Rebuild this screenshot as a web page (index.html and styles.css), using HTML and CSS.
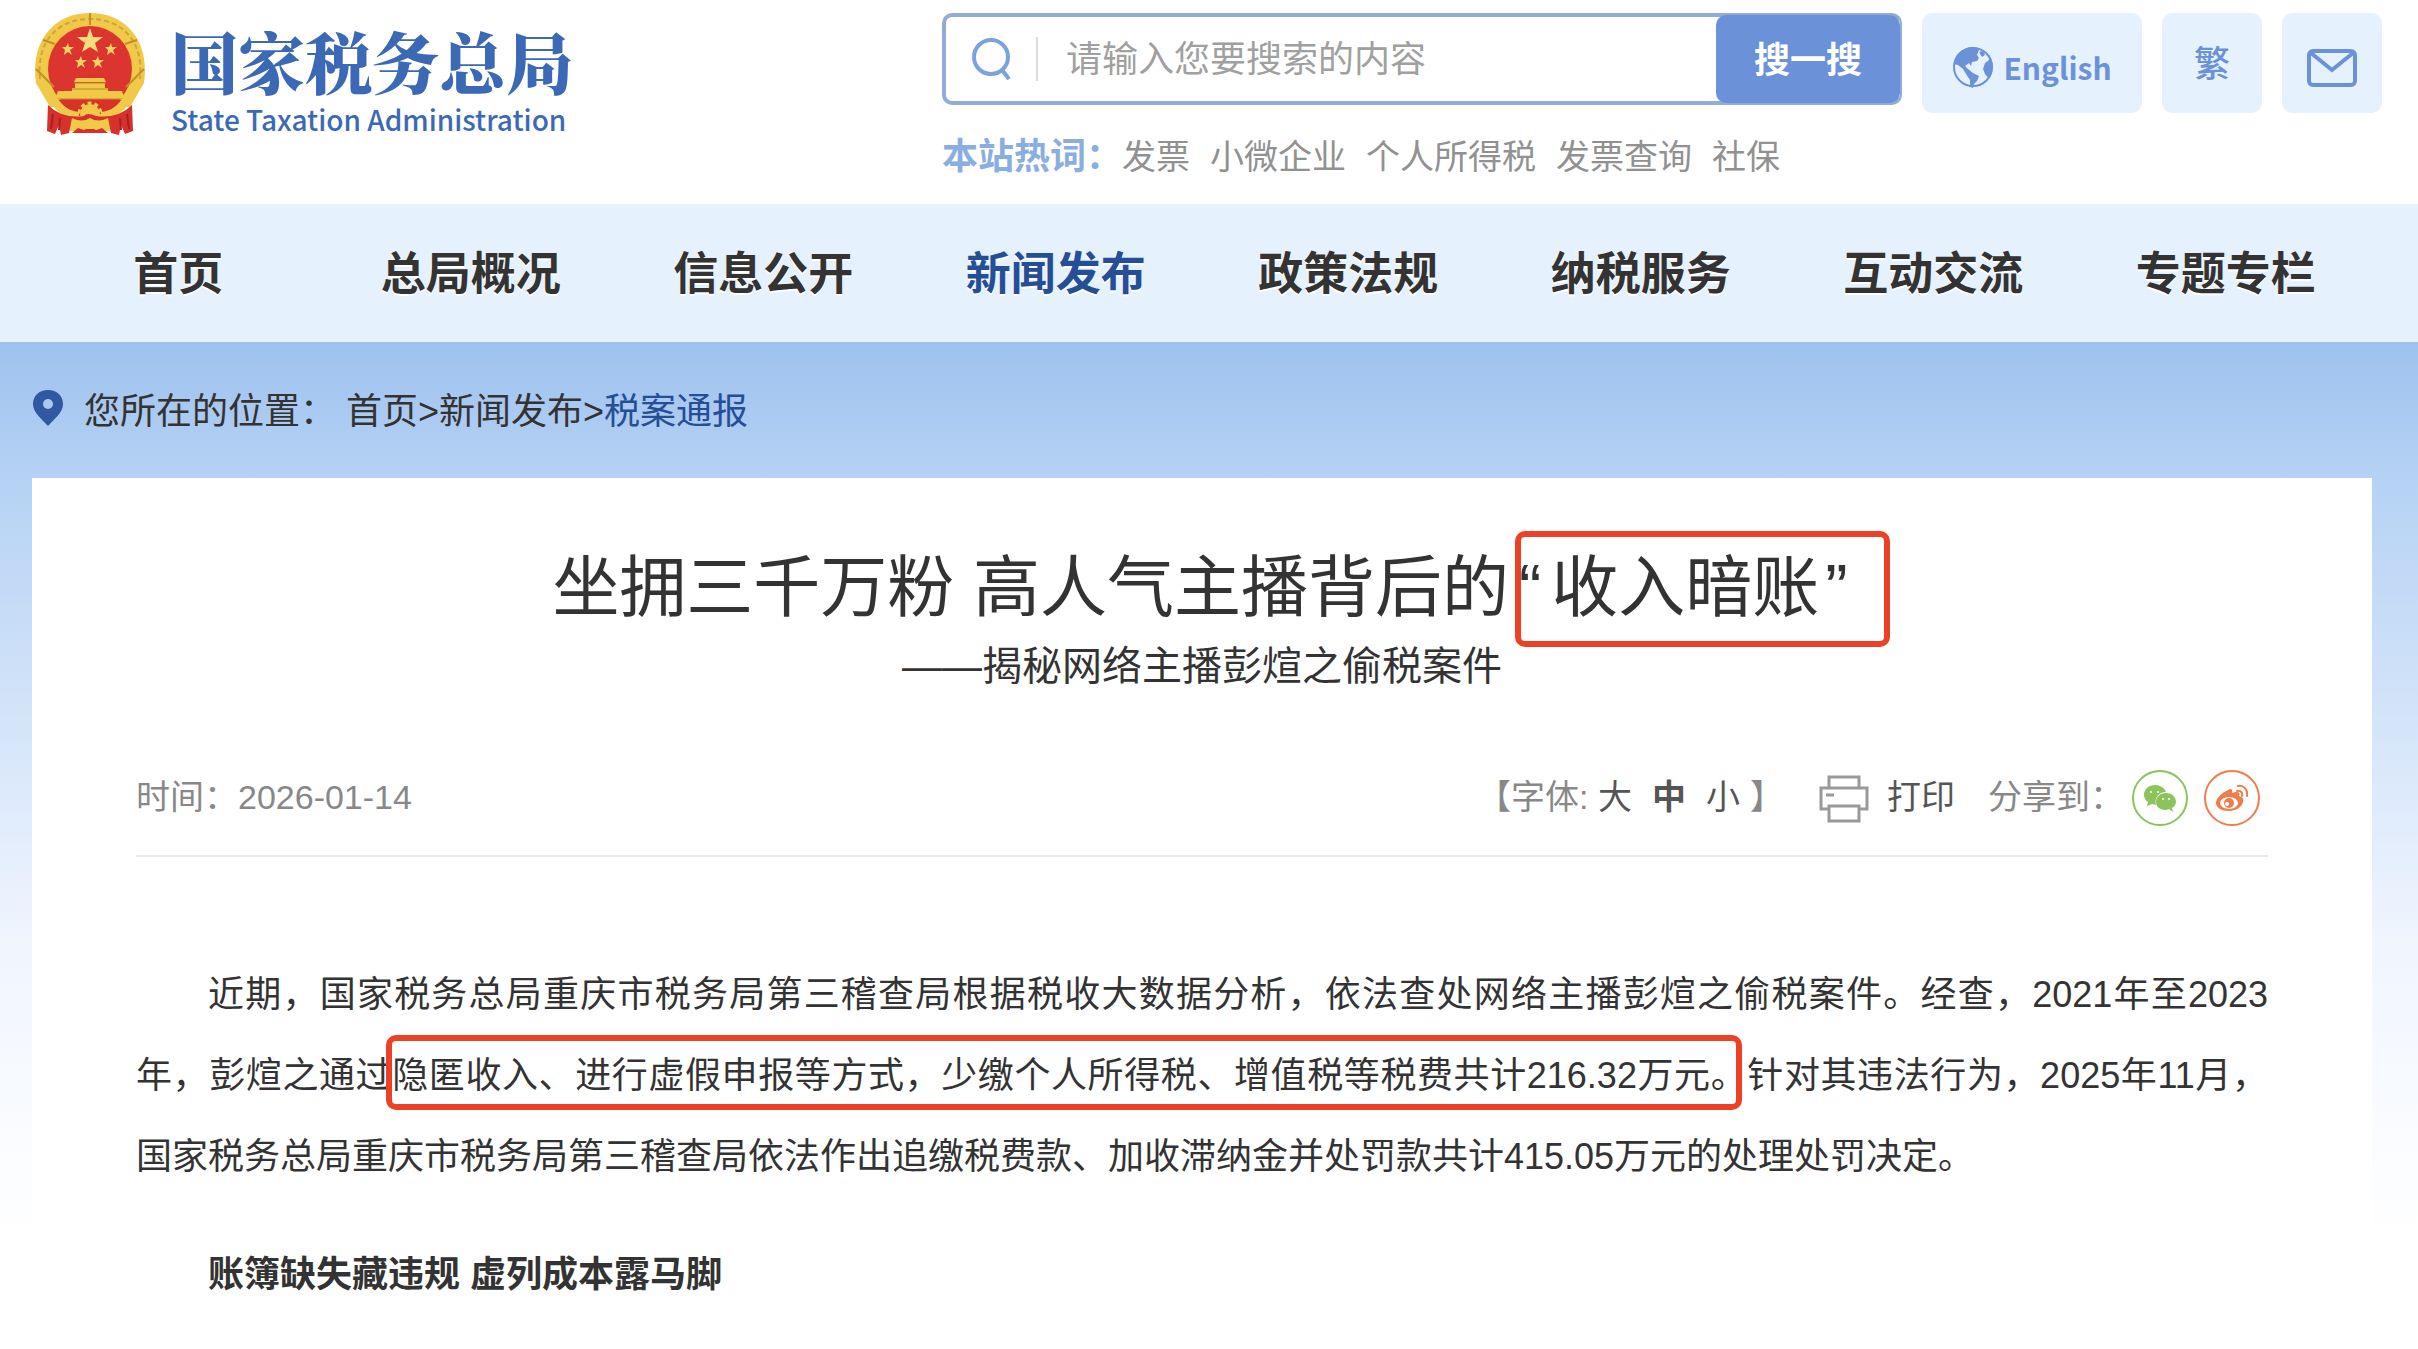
FILE: index.html
```html
<!DOCTYPE html>
<html lang="zh-CN">
<head>
  <meta charset="UTF-8">
  <meta name="viewport" content="width=device-width, initial-scale=1.0">
  <title>国家税务总局 - 税案通报</title>
  <link rel="stylesheet" href="styles.css">
</head>
<body>
  <header class="header">
    <a class="logo" href="#">
      <svg class="emblem" viewBox="0 0 112 122" aria-hidden="true">
        <path d="M16 94L2 70C-4 28 20 0 56 0s60 28 54 70L96 94z" fill="#f0c948"/>
        <path d="M6 66C2 28 24 6 56 6s54 22 50 60" fill="none" stroke="#d3a335" stroke-width="2" stroke-dasharray="5 3"/>
        <ellipse cx="56" cy="56" rx="42" ry="43" fill="#dc3530"/>
        <path d="M2 56l18 18M110 56L92 74M9 27l12 4M103 27l-12 4M56 0v12" stroke="#c18f25" stroke-width="2"/>
        <path d="M56 15l3 9h10l-8 6 3 9-8-5-8 5 3-9-8-6h10z" fill="#f6dc7c"/>
        <g fill="#f3d35f">
          <path id="star" d="M34 30l1 4h5l-4 3 2 5-4-3-4 3 1-5-3-3h4z"/>
          <use href="#star" x="43"/>
          <use href="#star" x="13" y="13"/>
          <use href="#star" x="30" y="13"/>
        </g>
        <path d="M42 65h28l2 4H40zM41 70h30v6H41zM38 75h36v6H38zM24 78h64l3 8H21z" fill="#f0c948"/>
        <path d="M40 70h32M38 76h36M22 86h68" stroke="#bb8b22"/>
        <path d="M20 87h72l-9 16H29z" fill="#d8322b"/>
        <path d="M18 84q10 18 27 19M94 84q-10 18-27 19" fill="none" stroke="#f0c948" stroke-width="8"/>
        <circle cx="56" cy="101" r="10" fill="#f0c948"/>
        <circle cx="56" cy="101" r="11" fill="none" stroke="#f0c948" stroke-width="3" stroke-dasharray="4 3"/>
        <path d="M30 104h52l-6 14H36z" fill="#f0c948"/>
        <path d="M14 92q14 14 36 11 3-4 12 0 22 3 36-11l1 26-8 3-4-9-2 10-8-2-3-15q-10 5-18 0-8 5-18 0l-3 15-8 2-2-10-4 9-8-3z" fill="#d6312c"/>
        <path d="M38 120l6-5 6 2 6-3 6 3 6-2 6 5z" fill="#d6312c"/>
        <path d="M46 110l4 3 3-3 3 4 3-4 3 3 4-3v6H46z" fill="#f0c948"/>
        <path d="M19 101l-2 15M26 105l-1 12M93 101l2 15M86 105l1 12" stroke="#a91f1f" stroke-width="2"/>
      </svg>
      <span class="logo-text">
        <span class="logo-cn">国家税务总局</span>
        <span class="logo-en">State Taxation Administration</span>
      </span>
    </a>

    <div class="search-area">
      <form class="search">
        <svg class="search-icon" viewBox="0 0 40 44" aria-hidden="true">
          <circle cx="19" cy="20" r="17" fill="none" stroke="#7aa2dc" stroke-width="4"/>
          <path d="M30 33l7 9" stroke="#7aa2dc" stroke-width="4"/>
        </svg>
        <input class="search-input" type="text" placeholder="请输入您要搜索的内容" aria-label="搜索">
        <button class="search-button" type="button">搜一搜</button>
      </form>
      <div class="hot">
        <strong class="hot-title">本站热词：</strong>
        <a href="#">发票</a>
        <a href="#">小微企业</a>
        <a href="#">个人所得税</a>
        <a href="#">发票查询</a>
        <a href="#">社保</a>
      </div>
    </div>

    <div class="tools">
      <a class="tool tool-english" href="#">
        <svg class="globe" viewBox="0 0 42 42" aria-hidden="true">
          <circle cx="21" cy="21" r="19" fill="none" stroke="#6b92d8" stroke-width="2"/>
          <path d="M2 18C3 8 11 1 22 1l5 3-2 5 2 3-2 3-5 1-1 4-2-3-4 3 3 3 5 4 6 3-2 5-3 3-1 4-3-1v-7l-4-6-3-5-5-4z" fill="#6b92d8"/>
          <path d="M37 9c5 7 5 17 0 24l-4-5-2-5 2-6 4-3zM27 6l4-1 2 4-3 2z" fill="#6b92d8"/>
        </svg>
        <span>English</span>
      </a>
      <a class="tool tool-square" href="#">繁</a>
      <a class="tool tool-square" href="#" aria-label="邮箱">
        <svg class="mail" viewBox="0 0 50 38" aria-hidden="true">
          <rect x="2" y="2" width="46" height="34" rx="4" fill="none" stroke="#6b92d8" stroke-width="4"/>
          <path d="M4 4l21 17L46 4" fill="none" stroke="#6b92d8" stroke-width="4"/>
        </svg>
      </a>
    </div>
  </header>

  <nav class="nav">
    <a href="#">首页</a>
    <a href="#">总局概况</a>
    <a href="#">信息公开</a>
    <a class="active" href="#">新闻发布</a>
    <a href="#">政策法规</a>
    <a href="#">纳税服务</a>
    <a href="#">互动交流</a>
    <a href="#">专题专栏</a>
  </nav>

  <main class="main">
    <div class="crumbs">
      <svg class="pin" viewBox="0 0 32 38" aria-hidden="true">
        <path d="M16 1C7 1 1 7 1 15c0 9 9 15 15 22 6-7 15-13 15-22C31 7 25 1 16 1z" fill="#3059a4"/>
        <circle cx="16" cy="15" r="5" fill="#a9c9f1"/>
      </svg>
      <span class="crumbs-label">您所在的位置：</span>
      <span><a href="#">首页</a>&gt;<a href="#">新闻发布</a>&gt;<a class="current" href="#">税案通报</a></span>
    </div>

    <article class="article">
      <h1 class="title">坐拥三千万粉 高人气主播背后的<span class="marked marked-title"><span class="quote-open">“</span>收入暗账<span class="quote-close">”</span></span></h1>
      <p class="subtitle">——揭秘网络主播彭煊之偷税案件</p>

      <div class="meta">
        <span class="time">时间：2026-01-14</span>
        <span class="font-size">【字体: <button type="button">大</button><button class="on" type="button">中</button><button type="button">小</button>】</span>
        <button class="print" type="button">
          <svg class="printer" viewBox="0 0 50 48" aria-hidden="true">
            <path d="M10 13V2h30v11M10 34H2V13h46v21h-8M10 31h30v15H10zM7 20h8" fill="none" stroke="#999" stroke-width="3"/>
          </svg>
          打印
        </button>
        <span class="share">分享到：</span>
        <a class="share-link wechat" href="#" aria-label="微信">
          <svg viewBox="0 0 32 28" aria-hidden="true">
            <path d="M11 1C5 1 0 5 0 11c0 3 2 6 4 7l-1 4 5-2 4 1c-2-7 3-13 10-13C21 4 16 1 11 1z" fill="#8cc35c"/>
            <path d="M22 9c-6 0-10 4-10 9s4 8 10 8l3-1 4 3-1-4c2-1 4-4 4-6 0-5-4-9-10-9z" fill="#8cc35c"/>
            <g fill="#fff">
              <circle cx="7" cy="8" r="1"/>
              <circle cx="14" cy="8" r="1"/>
              <circle cx="19" cy="15" r="1"/>
              <circle cx="25" cy="15" r="1"/>
            </g>
          </svg>
        </a>
        <a class="share-link weibo" href="#" aria-label="微博">
          <svg viewBox="0 0 32 28" aria-hidden="true">
            <path d="M12 6c3-2 5-1 4 3 5-2 9-1 7 3 4 1 5 3 4 6-1 5-7 9-14 9C6 27 0 24 0 19 0 14 6 9 12 6z" fill="#ef7d4b"/>
            <ellipse cx="13" cy="19" rx="9" ry="6" fill="#fff"/>
            <circle cx="13" cy="19" r="5" fill="#ef7d4b"/>
            <circle cx="11" cy="20" r="2" fill="#fff"/>
            <path d="M21 7c4-1 6 2 5 5M22 2c6-1 10 4 9 10" fill="none" stroke="#ef7d4b" stroke-width="2" stroke-linecap="round"/>
          </svg>
        </a>
      </div>

      <div class="content">
        <p>近期，国家税务总局重庆市税务局第三稽查局根据税收大数据分析，依法查处网络主播彭煊之偷税案件。经查，2021年至2023年，彭煊之通过<span class="marked marked-text">隐匿收入、进行虚假申报等方式，少缴个人所得税、增值税等税费共计216.32万元。</span>针对其违法行为，2025年11月，国家税务总局重庆市税务局第三稽查局依法作出追缴税费款、加收滞纳金并处罚款共计415.05万元的处理处罚决定。</p>
        <p><strong>账簿缺失藏违规 虚列成本露马脚</strong></p>
      </div>
    </article>
  </main>
</body>
</html>
```
FILE: styles.css
```css
* {
  box-sizing: border-box;
}

body {
  margin: 0;
  font-family: "Liberation Sans", "Noto Sans CJK SC", sans-serif;
  font-size: 36px;
  color: #333;
  background: #fff;
}

a {
  color: inherit;
  text-decoration: none;
}

button {
  padding: 0;
  border: none;
  background: none;
  font: inherit;
  cursor: pointer;
}

svg {
  display: block;
  flex: none;
}

.header {
  display: flex;
  align-items: flex-start;
  height: 204px;
  padding: 13px 36px 0 34px;
}

.logo {
  display: flex;
  gap: 25px;
  margin-right: auto;
  color: #3c69b5;
}

.emblem {
  width: 112px;
  height: 122px;
}

.logo-text {
  display: flex;
  flex-direction: column;
  font-family: "Noto Sans CJK SC", sans-serif;
}

.logo-cn {
  font-family: "Noto Serif CJK SC", "Noto Sans CJK SC", serif;
  font-size: 67px;
  font-weight: 900;
  line-height: 94px;
}

.logo-en {
  font-size: 28px;
  font-weight: 500;
  line-height: 24px;
}

.search-area {
  width: 960px;
  margin-right: 20px;
}

.search {
  display: flex;
  align-items: center;
  height: 92px;
  padding-left: 26px;
  border: 4px solid #92acd8;
  border-right-width: 2px;
  border-radius: 10px;
}

.search-icon {
  width: 40px;
  height: 44px;
}

.search-input {
  flex: 1;
  min-width: 0;
  height: 44px;
  margin-left: 24px;
  padding: 2px 0 0 28px;
  border: none;
  border-left: 2px solid #ddd;
  outline: none;
  font: inherit;
}

.search-input::placeholder {
  color: #a0a0a0;
}

.search-button {
  width: 184px;
  height: 88px;
  padding-bottom: 4px;
  border-radius: 10px;
  background: #6b92d8;
  color: #fff;
  font-weight: bold;
}

.hot {
  display: flex;
  align-items: center;
  gap: 20px;
  margin-top: 27px;
  font-size: 34px;
  line-height: 50px;
  color: #919191;
}

.hot-title {
  margin-right: -20px;
  font-size: 36px;
  color: #8aaee0;
}

.tools {
  display: flex;
  gap: 20px;
}

.tool {
  display: flex;
  align-items: center;
  justify-content: center;
  height: 100px;
  border-radius: 10px;
  background: #e6f1fe;
  color: #6b92d8;
}

.tool-english {
  gap: 9px;
  width: 220px;
  padding-top: 8px;
  font-family: "Noto Sans CJK SC", sans-serif;
  font-size: 30px;
  font-weight: bold;
}

.tool-square {
  width: 100px;
  padding-bottom: 4px;
  font-weight: 500;
}

.globe {
  width: 42px;
  height: 42px;
}

.mail {
  width: 50px;
  height: 38px;
  margin-top: 14px;
}

.nav {
  display: grid;
  grid-template-columns: repeat(8, 1fr);
  padding: 4px 46px 0 32px;
  background: #e6f1fe;
  font-size: 45px;
  font-weight: bold;
  line-height: 134px;
  text-align: center;
  text-shadow: 0 2px 0 #fff;
}

.nav .active {
  color: #254e97;
}

.main {
  padding: 0 46px 0 32px;
  background: linear-gradient(#9ec1ee, #b5d2f4 136px, #f0f5fe 600px, #fff 900px);
}

.crumbs {
  display: flex;
  align-items: center;
  height: 136px;
  padding-bottom: 4px;
}

.pin {
  width: 32px;
  height: 38px;
}

.crumbs-label {
  margin: 0 10px 0 20px;
}

.crumbs .current {
  color: #254e97;
}

.article {
  padding: 62px 104px 0;
  background: #fff;
}

.title {
  margin: 0;
  font-size: 67px;
  font-weight: normal;
  line-height: 96px;
  text-align: center;
}

.quote-open {
  margin: 0 10px;
}

.quote-close {
  margin: 0 4px 0 6px;
}

.subtitle {
  margin: 0;
  font-size: 40px;
  line-height: 60px;
  text-align: center;
}

/* red frames drawn over the highlighted words */
.marked {
  position: relative;
}

.marked::after {
  content: "";
  position: absolute;
  border: 6px solid #ec4027;
  border-radius: 10px;
}

.marked-title::after {
  inset: -19px -38px -22px 6px;
}

.marked-text::after {
  inset: -20px 5px -14px -6px;
}

.meta {
  display: flex;
  align-items: center;
  height: 120px;
  margin-top: 41px;
  padding: 0 8px 4px 0;
  border-bottom: 2px solid #e9e9e9;
  font-size: 34px;
  color: #888;
}

.time {
  margin-right: auto;
}

.font-size button {
  margin-right: 20px;
  color: #555;
}

.font-size button:last-child {
  margin-right: 10px;
}

.font-size .on {
  font-weight: bold;
}

.print {
  display: flex;
  align-items: center;
  gap: 18px;
  margin: 0 33px 0 35px;
  color: #555;
}

.printer {
  width: 50px;
  height: 48px;
  margin-top: 10px;
}

.share {
  margin-right: -8px;
}

.share-link {
  display: flex;
  align-items: center;
  justify-content: center;
  width: 56px;
  height: 56px;
  margin: 8px 0 0 16px;
  border: 2px solid;
  border-radius: 50%;
}

.share-link svg {
  width: 32px;
  height: 28px;
}

.wechat {
  color: #8cc35c;
}

.weibo {
  color: #ef7d4b;
}

.content {
  padding-top: 97px;
  line-height: 81px;
  text-align: justify;
}

.content p {
  margin: 0 0 37px;
  text-indent: 2em;
}
```
